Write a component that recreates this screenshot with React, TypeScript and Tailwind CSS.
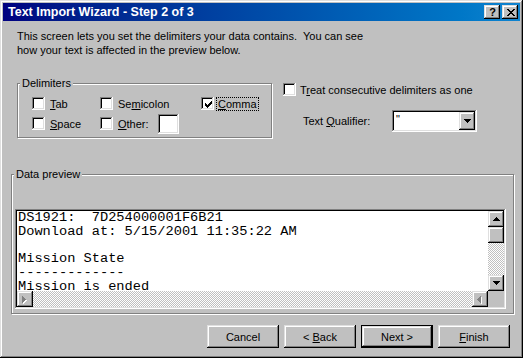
import React from "react";

const raised =
  "bg-[#c0c0c0] shadow-[inset_-1px_-1px_#000,inset_1px_1px_#dfdfdf,inset_-2px_-2px_#808080,inset_2px_2px_#fff]";
const sunken =
  "shadow-[inset_-1px_-1px_#fff,inset_1px_1px_#808080,inset_-2px_-2px_#dfdfdf,inset_2px_2px_#000]";
const etched = "border border-[#808080] shadow-[inset_1px_1px_#fff,1px_1px_#fff]";

const CHECK: [number, number, number][] = [
  [6, 0, 1],
  [5, 1, 2],
  [0, 2, 1],
  [4, 2, 3],
  [0, 3, 2],
  [3, 3, 3],
  [0, 4, 5],
  [1, 5, 3],
  [2, 6, 1],
];

function CheckBox({ checked = false }: { checked?: boolean }) {
  return (
    <div className={`w-[13px] h-[13px] bg-white ${sunken} flex items-center justify-center shrink-0`}>
      {checked && (
        <svg width="7" height="7" viewBox="0 0 7 7" shapeRendering="crispEdges" className="mt-[1px] ml-[1px]">
          {CHECK.map(([x, y, w], i) => (
            <rect key={i} x={x} y={y} width={w} height={1} fill="#000" />
          ))}
        </svg>
      )}
    </div>
  );
}

function TriDown({ color = "#000" }: { color?: string }) {
  return (
    <svg width="7" height="4" viewBox="0 0 7 4" shapeRendering="crispEdges">
      <rect x="0" y="0" width="7" height="1" fill={color} />
      <rect x="1" y="1" width="5" height="1" fill={color} />
      <rect x="2" y="2" width="3" height="1" fill={color} />
      <rect x="3" y="3" width="1" height="1" fill={color} />
    </svg>
  );
}

function TriUp() {
  return (
    <svg width="7" height="4" viewBox="0 0 7 4" shapeRendering="crispEdges">
      <rect x="3" y="0" width="1" height="1" fill="#000" />
      <rect x="2" y="1" width="3" height="1" fill="#000" />
      <rect x="1" y="2" width="5" height="1" fill="#000" />
      <rect x="0" y="3" width="7" height="1" fill="#000" />
    </svg>
  );
}

function TriSide({ dir }: { dir: "left" | "right" }) {
  const cols = dir === "left" ? [3, 2, 1, 0] : [0, 1, 2, 3];
  const hs = [1, 3, 5, 7];
  return (
    <svg width="6" height="9" viewBox="0 0 6 9" shapeRendering="crispEdges">
      {cols.map((x, i) => (
        <rect key={"w" + i} x={x + 1} y={4 - (hs[i] - 1) / 2 + 1} width={1} height={hs[i]} fill="#fff" />
      ))}
      {cols.map((x, i) => (
        <rect key={"g" + i} x={x} y={4 - (hs[i] - 1) / 2} width={1} height={hs[i]} fill="#808080" />
      ))}
    </svg>
  );
}

const XPIX: [number, number, number][] = [
  [0, 0, 2],
  [6, 0, 2],
  [1, 1, 2],
  [5, 1, 2],
  [2, 2, 4],
  [3, 3, 2],
  [2, 4, 4],
  [1, 5, 2],
  [5, 5, 2],
  [0, 6, 2],
  [6, 6, 2],
];

export default function App() {
  return (
    <div
      className={`w-[523px] h-[358px] bg-[#c0c0c0] p-[3px] overflow-hidden text-black text-[11px] leading-[14px] font-['Liberation_Sans',Arial,sans-serif] shadow-[inset_-1px_-1px_#000,inset_1px_1px_#dfdfdf,inset_-2px_-2px_#808080,inset_2px_2px_#fff]`}
    >
      {/* Caption */}
      <div className="h-[18px] flex items-center bg-linear-to-r from-[#000080] to-[#1084d0] pl-[5px] pr-[2px]">
        <span className="flex-1 text-white font-bold text-[12.5px] leading-[18px] font-['Liberation_Sans',Arial,sans-serif]">
          Text Import Wizard - Step 2 of 3
        </span>
        <div className="flex gap-[2px]">
          <div className={`w-[16px] h-[14px] ${raised} flex items-center justify-center font-bold text-[11px] leading-[11px] pt-[1px] pl-[1px]`}>
            ?
          </div>
          <div className={`w-[16px] h-[14px] ${raised} flex items-center justify-center pl-[1px]`}>
            <svg width="8" height="7" viewBox="0 0 8 7" shapeRendering="crispEdges">
              {XPIX.map(([x, y, w], i) => (
                <rect key={i} x={x} y={y} width={w} height={1} fill="#000" />
              ))}
            </svg>
          </div>
        </div>
      </div>

      {/* Description */}
      <div className="ml-[14px] mt-[8px] whitespace-pre">
        {"This screen lets you set the delimiters your data contains.  You can see\nhow your text is affected in the preview below."}
      </div>

      {/* Delimiters row */}
      <div className="flex mt-[26px]">
        <div className={`relative ml-[14px] w-[255px] h-[55px] ${etched} pl-[14px] pt-[13px]`}>
          <span className="absolute left-[2px] top-[-8px] bg-[#c0c0c0] px-[2px]">Delimiters</span>
          <div className="grid grid-cols-[68px_101px_auto] gap-y-[7px]">
            <div className="flex items-center h-[13px]">
              <CheckBox />
              <span className="ml-[5px]">
                <u>T</u>ab
              </span>
            </div>
            <div className="flex items-center h-[13px]">
              <CheckBox />
              <span className="ml-[5px]">
                Se<u>m</u>icolon
              </span>
            </div>
            <div className="flex items-center h-[13px]">
              <CheckBox checked />
              <span className="ml-[2px] border border-dotted border-black px-[1px] leading-[12px]">
                <u>C</u>omma
              </span>
            </div>
            <div className="flex items-center h-[13px]">
              <CheckBox />
              <span className="ml-[5px]">
                <u>S</u>pace
              </span>
            </div>
            <div className="flex items-center h-[13px]">
              <CheckBox />
              <span className="ml-[5px]">
                <u>O</u>ther:
              </span>
              <div className={`ml-[9px] w-[21px] h-[20px] bg-white ${sunken} shrink-0`} />
            </div>
            <div />
          </div>
        </div>

        <div className="ml-[11px]">
          <div className="flex items-center h-[13px]">
            <CheckBox />
            <span className="ml-[4px]">
              T<u>r</u>eat consecutive delimiters as one
            </span>
          </div>
          <div className="flex items-center mt-[14px] h-[22px]">
            <span className="ml-[20px] w-[89px]">
              Text <u>Q</u>ualifier:
            </span>
            <div className={`w-[85px] h-[22px] bg-white ${sunken} p-[2px] flex`}>
              <span className="flex-1 pl-[2px] leading-[14px] text-black">&quot;</span>
              <div className={`w-[16px] h-[18px] ${raised} flex items-center justify-center`}>
                <TriDown />
              </div>
            </div>
          </div>
        </div>
      </div>

      {/* Data preview */}
      <div className={`relative mt-[36px] ml-[8px] w-[503px] h-[140px] ${etched} pl-[3px] pt-[34px]`}>
        <span className="absolute left-[2px] top-[-8px] bg-[#c0c0c0] px-[2px]">Data preview</span>
        <div className={`w-[491px] h-[100px] ${sunken} p-[2px]`}>
          <div className="grid grid-cols-[471px_16px] grid-rows-[80px_16px] w-[487px] h-[96px]">
            <div className="bg-white overflow-hidden pl-[1px] whitespace-pre font-['Liberation_Mono','Courier_New',monospace] text-[13.67px] leading-[13.7px]">
              {"DS1921:  7D254000001F6B21\nDownload at: 5/15/2001 11:35:22 AM\n\nMission State\n-------------\nMission is ended"}
            </div>
            <div className="flex flex-col bg-[repeating-conic-gradient(#c0c0c0_0%_25%,#ffffff_0%_50%)] bg-[length:2px_2px]">
              <div className={`w-[16px] h-[16px] ${raised} flex items-center justify-center`}>
                <TriUp />
              </div>
              <div className={`w-[16px] h-[16px] ${raised}`} />
              <div className="flex-1" />
              <div className={`w-[16px] h-[16px] ${raised} flex items-center justify-center`}>
                <TriDown />
              </div>
            </div>
            <div className="flex bg-[repeating-conic-gradient(#c0c0c0_0%_25%,#ffffff_0%_50%)] bg-[length:2px_2px]">
              <div className={`w-[16px] h-[16px] ${raised} flex items-center justify-center`}>
                <TriSide dir="left" />
              </div>
              <div className="flex-1" />
              <div className={`w-[16px] h-[16px] ${raised} flex items-center justify-center`}>
                <TriSide dir="right" />
              </div>
            </div>
            <div className="bg-[#c0c0c0]" />
          </div>
        </div>
      </div>

      {/* Buttons */}
      <div className="flex gap-[5px] ml-[204px] mt-[11px]">
        <div className={`w-[72px] h-[23px] ${raised} flex items-center justify-center`}>Cancel</div>
        <div className={`w-[72px] h-[23px] ${raised} flex items-center justify-center`}>
          <span className="whitespace-pre">
            {"< "}
            <u>B</u>ack
          </span>
        </div>
        <div className={`w-[72px] h-[23px] ${raised} border border-black flex items-center justify-center`}>
          <span className="whitespace-pre">{"Next >"}</span>
        </div>
        <div className={`w-[72px] h-[23px] ${raised} flex items-center justify-center`}>
          <span>
            <u>F</u>inish
          </span>
        </div>
      </div>
    </div>
  );
}
